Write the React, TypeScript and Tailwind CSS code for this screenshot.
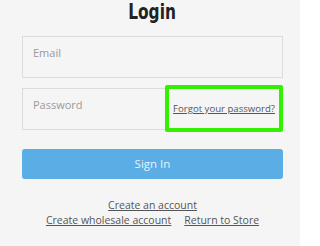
export default function App() {
  return (
    <div className="w-[300px] h-[246px] bg-[#f5f5f5] overflow-hidden font-['Open_Sans',sans-serif]">
      <div className="pl-[22px] pr-[17px]">
        {/* Title */}
        <div className="h-[28px] flex justify-center">
          <h1 className="inline-block scale-x-[0.7] origin-center text-[22px] leading-[24px] font-bold text-[#222] font-['DejaVu_Sans','Liberation_Sans',sans-serif]">
            Login
          </h1>
        </div>

        {/* Email */}
        <div className="mt-[8px] h-[42px] border border-[#dcdcdc] bg-[#f5f5f5] px-[10px] pt-[8px] text-[11px] text-[#9a9a9a]">
          Email
        </div>

        {/* Password */}
        <div className="relative mt-[10px] h-[42px] border border-[#dcdcdc] bg-[#f5f5f5] px-[10px] pt-[8px] text-[11px] text-[#9a9a9a]">
          Password
          <div className="absolute left-[142px] -top-[4px] -right-[1px] -bottom-[3px] border-[4px] border-[#33f000] rounded-[2px] bg-[#f5f5f5] flex items-center justify-center pt-[2px]">
            <a href="#" className="text-[9.6px] text-[#555] underline">
              Forgot your password?
            </a>
          </div>
        </div>

        {/* Sign in */}
        <button className="mt-[19px] w-full h-[30px] rounded-[3px] bg-[#5aade5] text-[11.5px] text-[#e8f3fb] flex items-center justify-center">
          Sign In
        </button>

        {/* Links */}
        <div className="mt-[19px] flex flex-col items-center text-[10.5px] leading-[15px] text-[#555]">
          <a href="#" className="underline">Create an account</a>
          <div className="flex gap-[13px]">
            <a href="#" className="underline">Create wholesale account</a>
            <a href="#" className="underline">Return to Store</a>
          </div>
        </div>
      </div>
    </div>
  );
}
